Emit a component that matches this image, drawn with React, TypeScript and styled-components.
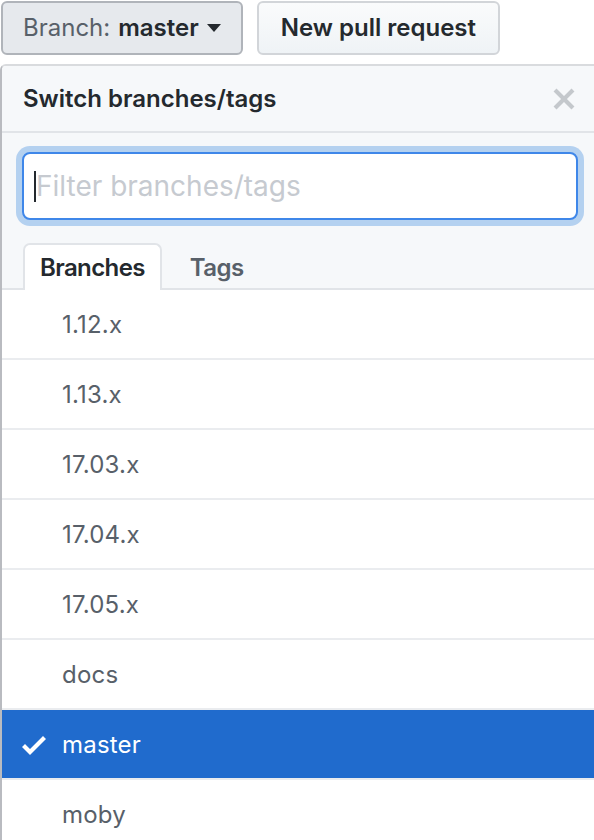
import React from "react";
import styled, { createGlobalStyle } from "styled-components";

const Global = createGlobalStyle`
  html, body { margin: 0; padding: 0; background: #ffffff; overflow: hidden; }
  body { font-family: Inter, "Noto Sans", "Liberation Sans", sans-serif; -webkit-font-smoothing: antialiased; }
  * { box-sizing: border-box; }
`;

const Page = styled.div`
  width: 594px;
  height: 840px;
  overflow: hidden;
`;

const Toolbar = styled.div`
  display: flex;
  gap: 14px;
  padding: 1px 0 0 1px;
`;

const Button = styled.button<{ $pressed?: boolean }>`
  display: flex;
  align-items: center;
  height: 54px;
  padding: 0 ${(p) => (p.$pressed ? "20px" : "22px")};
  border-radius: 6px;
  border: 2px solid ${(p) => (p.$pressed ? "#b0b4ba" : "#d2d5d9")};
  background: ${(p) => (p.$pressed ? "#e6e9ed" : "linear-gradient(#fafbfc, #eff3f6)")};
  font-family: inherit;
  font-size: 24px;
  line-height: 36px;
  font-weight: 600;
  color: #24292e;
  white-space: nowrap;
`;

const Label = styled.span`
  color: #586069;
  font-weight: 400;
  margin-right: 8px;
`;

const Caret = styled.span`
  display: inline-block;
  margin-left: 8px;
  border-left: 7px solid transparent;
  border-right: 7px solid transparent;
  border-top: 8px solid #24292e;
`;

const Popover = styled.div`
  margin-top: 9px;
  width: 600px;
  border: 2px solid #d9dbde;
  border-left-color: #b9bbc0;
  border-radius: 6px 6px 0 0;
  background: #ffffff;
`;

const Header = styled.div`
  display: flex;
  align-items: center;
  justify-content: space-between;
  height: 67px;
  padding: 0 22px 0 21px;
  background: #f6f8fa;
  border-bottom: 2px solid #e1e4e8;
  border-radius: 4px 4px 0 0;
`;

const Title = styled.span`
  font-size: 24px;
  font-weight: 600;
  color: #24292e;
`;

const Filters = styled.div`
  background: #f6f8fa;
  padding: 19px 20px 0 20px;
`;

const InputWrap = styled.div`
  position: relative;
`;

const Input = styled.input`
  display: block;
  width: 556px;
  height: 68px;
  padding: 0 12px;
  border: 2px solid #3f87e9;
  border-radius: 8px;
  background: #ffffff;
  box-shadow: 0 0 0 6px rgba(3, 102, 214, 0.27);
  font-family: inherit;
  font-size: 28px;
  color: #24292e;
  outline: none;
  &::placeholder { color: #c6cad0; }
`;

const TextCaret = styled.span`
  position: absolute;
  left: 12px;
  top: 19px;
  width: 2px;
  height: 31px;
  background: #24292e;
`;

const Tabs = styled.div`
  display: flex;
  gap: 11px;
  margin: 23px -20px 0 -20px;
  padding-left: 21px;
  height: 47px;
  border-bottom: 2px solid #e1e4e8;
`;

const Tab = styled.div<{ $active?: boolean }>`
  height: 47px;
  padding: 0 15px;
  display: flex;
  align-items: center;
  font-size: 24px;
  font-weight: 600;
  letter-spacing: -0.6px;
  color: ${(p) => (p.$active ? "#24292e" : "#586069")};
  background: ${(p) => (p.$active ? "#ffffff" : "transparent")};
  border: 2px solid ${(p) => (p.$active ? "#e1e4e8" : "transparent")};
  border-bottom: none;
  border-radius: 7px 7px 0 0;
`;

const List = styled.div``;

const Row = styled.div<{ $selected?: boolean }>`
  display: flex;
  align-items: center;
  gap: 16px;
  height: 70px;
  padding: 1px 20px 0 20px;
  border-bottom: 2px solid #eaecef;
  background: ${(p) => (p.$selected ? "#206bcd" : "#ffffff")};
  background-clip: padding-box;
  font-size: 24px;
  line-height: 36px;
  letter-spacing: 0.2px;
  color: ${(p) => (p.$selected ? "#ffffff" : "#586069")};
`;

const IconSlot = styled.span`
  display: flex;
  width: 24px;
  height: 32px;
`;

const CloseIcon = () => (
  <svg width="24" height="32" viewBox="0 0 12 16" fill="#c4c8cc">
    <path d="M7.48 8l3.75 3.75-1.48 1.48L6 9.48l-3.75 3.75-1.48-1.48L4.52 8 .77 4.25l1.48-1.48L6 6.52l3.75-3.75 1.48 1.48L7.48 8z" />
  </svg>
);

const CheckIcon = () => (
  <svg width="24" height="32" viewBox="0 0 12 16" fill="#ffffff">
    <path d="M12 5l-8 8-4-4 1.5-1.5L4 10l6.5-6.5L12 5z" />
  </svg>
);

const branches = ["1.12.x", "1.13.x", "17.03.x", "17.04.x", "17.05.x", "docs", "master", "moby"];

export default function App() {
  return (
    <Page>
      <Global />
      <Toolbar>
        <Button $pressed>
          <Label>Branch:</Label>master<Caret />
        </Button>
        <Button>New pull request</Button>
      </Toolbar>
      <Popover>
        <Header>
          <Title>Switch branches/tags</Title>
          <CloseIcon />
        </Header>
        <Filters>
          <InputWrap>
            <Input placeholder="Filter branches/tags" readOnly />
            <TextCaret />
          </InputWrap>
          <Tabs>
            <Tab $active>Branches</Tab>
            <Tab>Tags</Tab>
          </Tabs>
        </Filters>
        <List>
          {branches.map((b) => (
            <Row key={b} $selected={b === "master"}>
              <IconSlot>{b === "master" ? <CheckIcon /> : null}</IconSlot>
              {b}
            </Row>
          ))}
        </List>
      </Popover>
    </Page>
  );
}
